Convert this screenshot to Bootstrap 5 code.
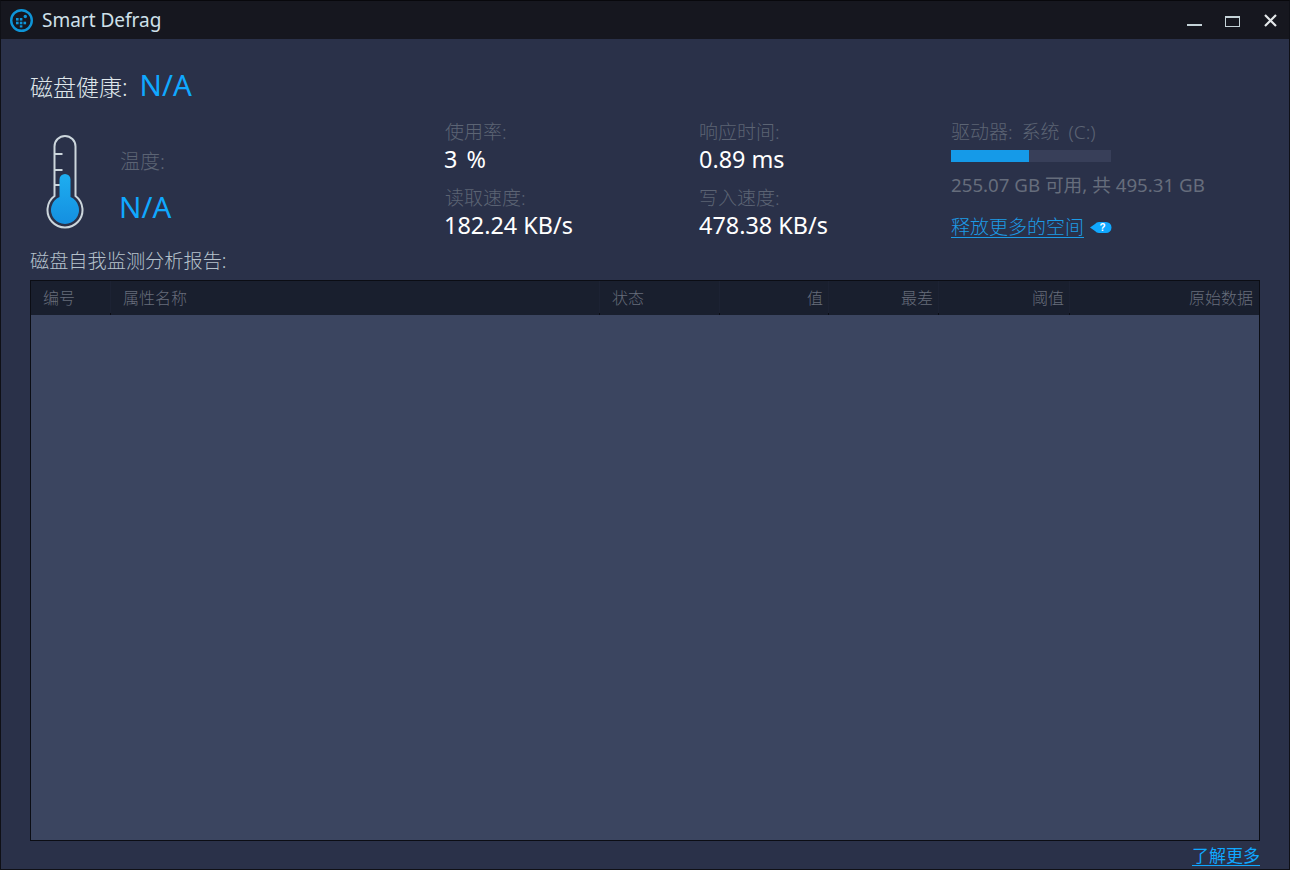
<!DOCTYPE html>
<html lang="zh-CN">
<head>
    <meta charset="UTF-8">
    <title>Smart Defrag</title>
    <link href="https://cdn.jsdelivr.net/npm/bootstrap@5.3.3/dist/css/bootstrap.min.css" rel="stylesheet">
    <style>
        html, body { height: 100%; overflow: hidden; }
        body { background: #2a3149; font-family: "Noto Sans", "Noto Sans CJK SC", sans-serif; font-size: 16px; }
        .app-window { width: 1290px; height: 870px; border: 1px solid #0f1016; border-top-color: #08080c; }
        .title-bar { height: 38px; background: #16171f; color: #cfe0ea; font-size: 19px; padding-left: 8px; }
        .title-text { margin-left: 8px; line-height: 1; }
        .win-btns { gap: 23px; padding-right: 12px; }
        .main-area { padding: 0 29px; }
        .health-row { height: 81px; padding-top: 28px; color: #dfe6ea; font-size: 23px; line-height: 36px; font-weight: 300; white-space: nowrap; }
        .health-value { color: #10a8ff; font-size: 29.5px; margin-left: 6px; font-weight: 400; }
        .stats-row { height: 130px; }
        .thermo-col { width: 89px; padding-left: 14px; padding-top: 14px; }
        .temp-col { width: 326px; }
        .temp-label { color: #5c6474; font-size: 20px; line-height: 24px; margin: 30px 0 0 1px; font-weight: 300; }
        .temp-value { color: #10a8ff; font-size: 29.5px; line-height: 36px; margin-top: 15px; }
        .metric-col { width: 254px; }
        .metric-col.narrow { width: 252px; }
        .metric-label { color: #5c6474; font-size: 19px; line-height: 24px; font-weight: 300; white-space: nowrap; }
        .metric-value { color: #fff; font-size: 23.4px; line-height: 30px; margin-bottom: 12px; white-space: nowrap; }
        .metric-col:not(.narrow) .metric-value { margin-left: -1px; }
        .wide-space { word-spacing: 3px; }
        .drive-label { word-spacing: 4px; }
        .drive-bar { width: 160px; height: 12px; background: #383f59; border-radius: 0; margin-top: 6px; }
        .drive-bar .progress-bar { background: #159ae8; }
        .drive-size { color: #666d7c; font-size: 18.7px; line-height: 24px; margin-top: 11px; white-space: nowrap; }
        .free-link { color: #1c9be6; font-size: 19px; line-height: 24px; margin-top: 18px; font-weight: 300; gap: 6px; }
        .free-link a { color: inherit; text-underline-offset: 3px; }
        .report-title { color: #b6c2cc; font-size: 19.2px; line-height: 24px; margin-top: -1px; margin-bottom: 7px; font-weight: 300; }
        .smart-table { height: 561px; background: #3b4560; border: 1px solid #0b0d14; }
        .smart-head { height: 34px; background: #191f2e; color: #676d7b; font-size: 16px; font-weight: 300; }
        .head-cell { padding: 0 6px 0 12px; line-height: 34px; white-space: nowrap;
            background: linear-gradient(#0b0d14, #0b0d14) right bottom / 1px 2px no-repeat, linear-gradient(#1c2233, #1c2233) right top / 1px 100% no-repeat; }
        .head-cell:last-child { background: none; }
        .col-id { width: 80px; }
        .col-name { width: 489px; }
        .col-status { width: 120px; }
        .col-value { width: 109px; }
        .col-worst { width: 110px; }
        .col-limit { width: 131px; }
        .more-link { color: #10a8ff; font-size: 17px; line-height: 24px; margin-top: 3px; }
        .more-link a { color: inherit; text-underline-offset: 3px; }
    </style>
</head>
<body>
    <div class="app-window d-flex flex-column">
        <div class="title-bar d-flex align-items-center justify-content-between">
            <div class="d-flex align-items-center">
                <svg width="25" height="25" viewBox="0 0 25 25">
                    <circle cx="12.500" cy="12.500" r="10.300" fill="none" stroke="#0e95d8" stroke-width="2.400"/>
                    <g fill="#0e95d8">
                        <rect x="7" y="10" width="2.600" height="2.600"/><rect x="10.800" y="10" width="2.600" height="2.600"/>
                        <rect x="7" y="13.700" width="2.600" height="2.600"/><rect x="10.800" y="13.700" width="2.600" height="2.600"/><rect x="14.500" y="13.700" width="2.600" height="2.600"/>
                        <rect x="10.800" y="17.300" width="2.600" height="2.200"/>
                        <circle cx="16.300" cy="8.500" r="1.700"/>
                    </g>
                </svg>
                <span class="title-text">Smart Defrag</span>
            </div>
            <div class="win-btns d-flex align-items-center">
                <svg width="15" height="15" viewBox="0 0 15 15"><rect x="0" y="11" width="15" height="2" fill="#c5d3d8"/></svg>
                <svg width="16" height="15" viewBox="0 0 16 15"><rect x=".5" y="3.500" width="14" height="10" fill="none" stroke="#c5d3d8"/><rect x="0" y="3" width="15" height="2" fill="#c5d3d8"/></svg>
                <svg width="13" height="15" viewBox="0 0 13 15"><path d="M1 2 12 13M12 2 1 13" stroke="#e4e8ea" stroke-width="2.200"/></svg>
            </div>
        </div>

        <div class="main-area flex-grow-1">
            <div class="health-row">磁盘健康: <span class="health-value">N/A</span></div>

            <div class="stats-row d-flex">
                <div class="thermo-col">
                    <svg class="d-block" width="40" height="96" viewBox="0 0 40 96">
                        <defs><linearGradient id="mercury" x1="0" y1="0" x2="0" y2="1"><stop offset="0" stop-color="#1eaef0"/><stop offset="1" stop-color="#148fe0"/></linearGradient></defs>
                        <path d="M10.500 62V12.500a10.500 10.500 0 0 1 21 0V62a17.500 17.500 0 1 1-21 0Z" fill="none" stroke="#ccd6dc" stroke-width="2"/>
                        <path d="M10.500 20h8M10.500 36h8M10.500 51h8" stroke="#ccd6dc" stroke-width="2"/>
                        <path d="M15.500 45.500a5.500 5.500 0 0 1 11 0V63.100a14 14 0 1 1-11 0Z" fill="url(#mercury)"/>
                    </svg>
                </div>
                <div class="temp-col">
                    <div class="temp-label">温度:</div>
                    <div class="temp-value">N/A</div>
                </div>
                <div class="metric-col">
                    <div class="metric-label">使用率:</div>
                    <div class="metric-value wide-space">3 %</div>
                    <div class="metric-label">读取速度:</div>
                    <div class="metric-value">182.24 KB/s</div>
                </div>
                <div class="metric-col narrow">
                    <div class="metric-label">响应时间:</div>
                    <div class="metric-value">0.89 ms</div>
                    <div class="metric-label">写入速度:</div>
                    <div class="metric-value">478.38 KB/s</div>
                </div>
                <div class="flex-grow-1">
                    <div class="metric-label drive-label">驱动器: 系统 (C:)</div>
                    <div class="progress drive-bar"><div class="progress-bar" style="width: 48.5%"></div></div>
                    <div class="drive-size">255.07 GB 可用, 共 495.31 GB</div>
                    <div class="free-link d-flex align-items-center">
                        <a href="#">释放更多的空间</a>
                        <svg width="22" height="13" viewBox="0 0 22 13"><path d="M0 6.500 5 3a5 5 0 0 1 4-2h7a5.500 5.500 0 0 1 0 11H9a5 5 0 0 1-4-2Z" fill="#10a8ff"/><text x="12.500" y="10" font-size="10" font-weight="700" text-anchor="middle" fill="#fff" font-family="Liberation Sans">?</text></svg>
                    </div>
                </div>
            </div>

            <div class="report-title">磁盘自我监测分析报告:</div>

            <div class="smart-table">
                <div class="smart-head d-flex">
                    <div class="head-cell col-id">编号</div>
                    <div class="head-cell col-name">属性名称</div>
                    <div class="head-cell col-status">状态</div>
                    <div class="head-cell col-value text-end">值</div>
                    <div class="head-cell col-worst text-end">最差</div>
                    <div class="head-cell col-limit text-end">阈值</div>
                    <div class="head-cell text-end flex-grow-1">原始数据</div>
                </div>
            </div>
            <div class="more-link text-end"><a href="#">了解更多</a></div>
        </div>
    </div>
    <script src="https://cdn.jsdelivr.net/npm/bootstrap@5.3.3/dist/js/bootstrap.bundle.min.js"></script>
</body>
</html>
